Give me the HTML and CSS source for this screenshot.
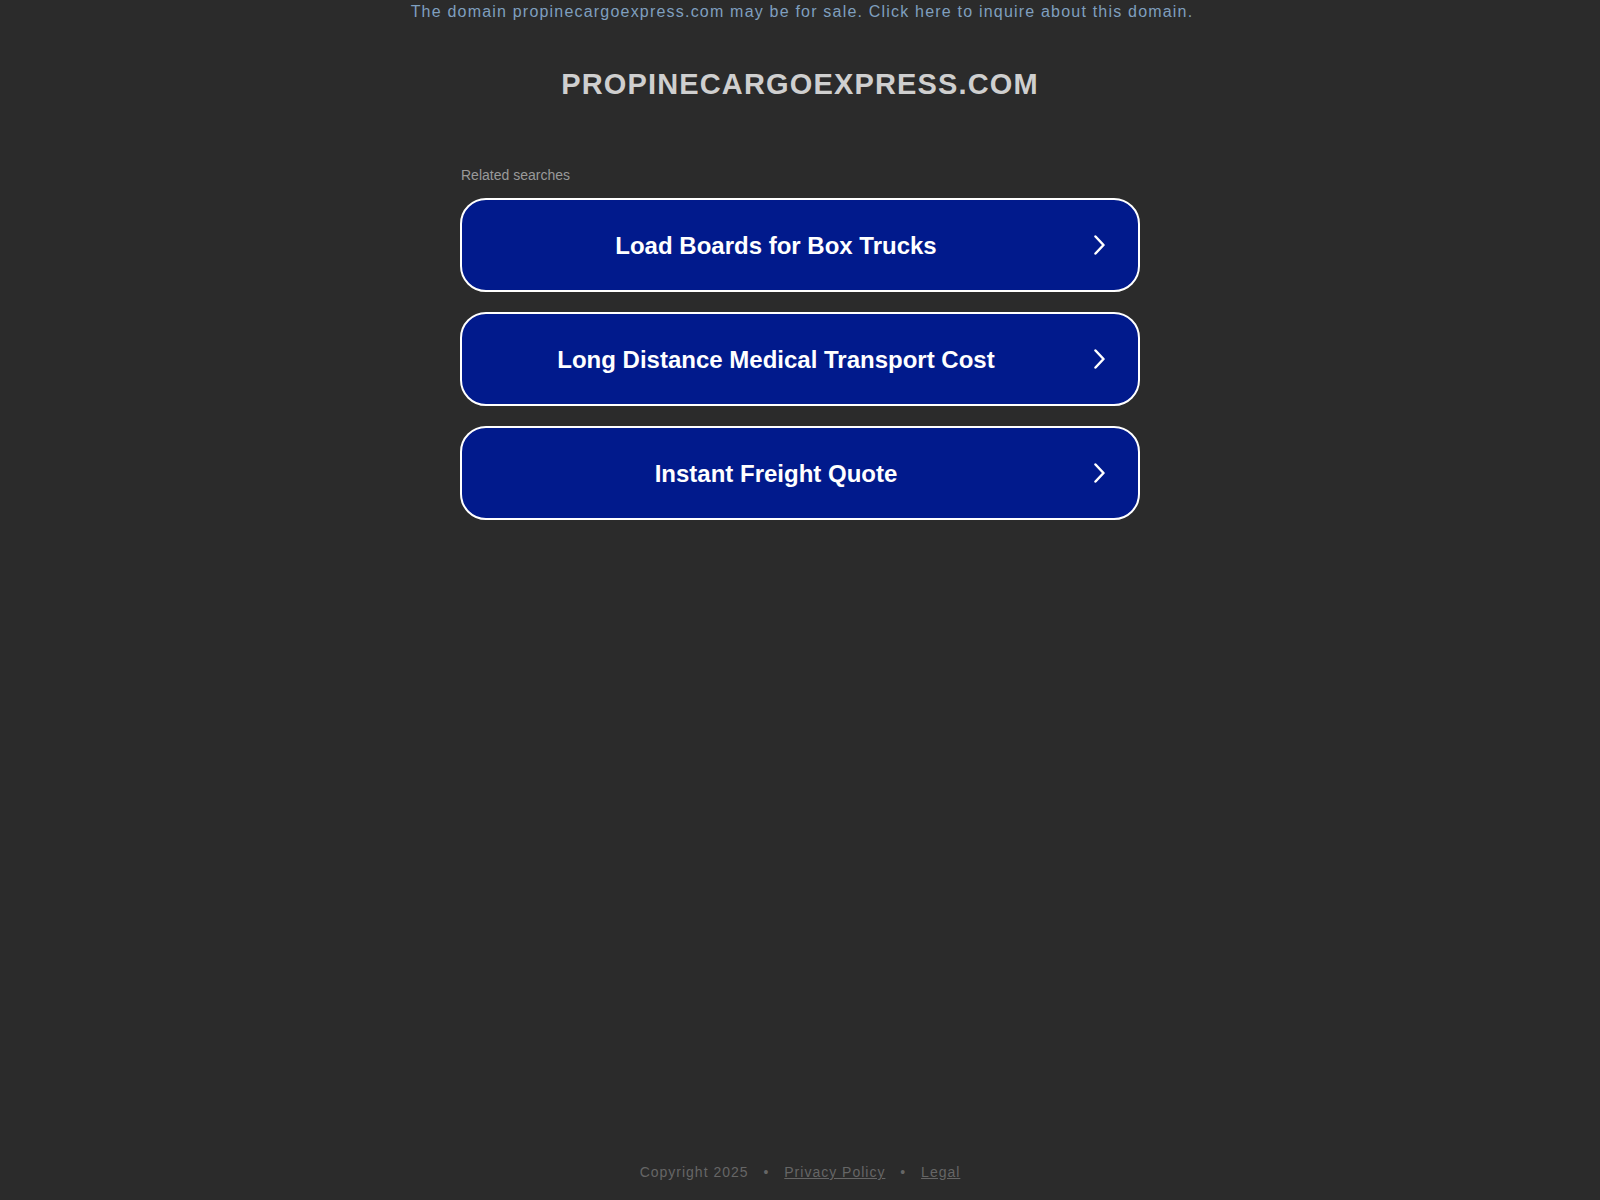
FILE: index.html
```html
<!DOCTYPE html>
<html lang="en">
<head>
<meta charset="utf-8">
<title>propinecargoexpress.com</title>
<link rel="stylesheet" href="styles.css">
</head>
<body>
<div class="page">
  <div class="banner">The domain propinecargoexpress.com may be for sale. Click here to inquire about this domain.</div>
  <h1 class="title">PROPINECARGOEXPRESS.COM</h1>
  <div class="searches">
    <div class="label">Related searches</div>
    <a class="btn" href="#"><span class="btn-text">Load Boards for Box Trucks</span><svg class="chev" viewBox="0 0 14 20" width="14" height="20"><path d="M2.5 1.5 L10.5 10 L2.5 18.5" fill="none" stroke="#fff" stroke-width="2.5" stroke-linecap="round" stroke-linejoin="round"/></svg></a>
    <a class="btn" href="#"><span class="btn-text">Long Distance Medical Transport Cost</span><svg class="chev" viewBox="0 0 14 20" width="14" height="20"><path d="M2.5 1.5 L10.5 10 L2.5 18.5" fill="none" stroke="#fff" stroke-width="2.5" stroke-linecap="round" stroke-linejoin="round"/></svg></a>
    <a class="btn" href="#"><span class="btn-text">Instant Freight Quote</span><svg class="chev" viewBox="0 0 14 20" width="14" height="20"><path d="M2.5 1.5 L10.5 10 L2.5 18.5" fill="none" stroke="#fff" stroke-width="2.5" stroke-linecap="round" stroke-linejoin="round"/></svg></a>
  </div>
  <div class="spacer"></div>
  <div class="footer">Copyright 2025 <span class="dot">•</span> <a href="#">Privacy Policy</a> <span class="dot">•</span> <a href="#">Legal</a></div>
</div>
</body>
</html>
```
FILE: styles.css
```css
html, body {
  margin: 0;
  padding: 0;
  background: #2b2b2b;
  height: 100%;
}
.page {
  min-height: 1200px;
  display: flex;
  flex-direction: column;
  align-items: center;
  font-family: "Liberation Sans", Arial, sans-serif;
}
.banner {
  margin-top: 2px;
  padding-left: 4px;
  font-size: 16px;
  line-height: 20px;
  letter-spacing: 1.2px;
  color: #7f9fbf;
  text-align: center;
}
.title {
  margin: 45px 0 0 0;
  font-size: 29px;
  line-height: 34px;
  font-weight: bold;
  letter-spacing: 1.15px;
  color: #cfcfcf;
  text-align: center;
}
.searches {
  width: 680px;
  margin-top: 65px;
  display: flex;
  flex-direction: column;
}
.label {
  font-size: 14px;
  line-height: 18px;
  color: #9a9a9a;
  margin-bottom: 14px;
  padding-left: 1px;
}
.btn {
  box-sizing: border-box;
  height: 94px;
  margin-bottom: 20px;
  border: 2px solid #ffffff;
  border-radius: 26px;
  background: #011a8c;
  display: flex;
  align-items: center;
  text-decoration: none;
  position: relative;
}
.btn-text {
  flex: 1;
  text-align: center;
  color: #ffffff;
  font-size: 24px;
  font-weight: bold;
  padding-right: 48px;
  margin-top: 1px;
}
.chev {
  position: absolute;
  right: 31px;
  top: 35px;
}
.spacer {
  flex: 1;
}
.footer {
  font-size: 14px;
  line-height: 18px;
  letter-spacing: 1px;
  color: #666666;
  margin-bottom: 19px;
}
.footer a {
  color: #666666;
  text-decoration: underline;
}
.dot {
  margin: 0 10px;
}
```
